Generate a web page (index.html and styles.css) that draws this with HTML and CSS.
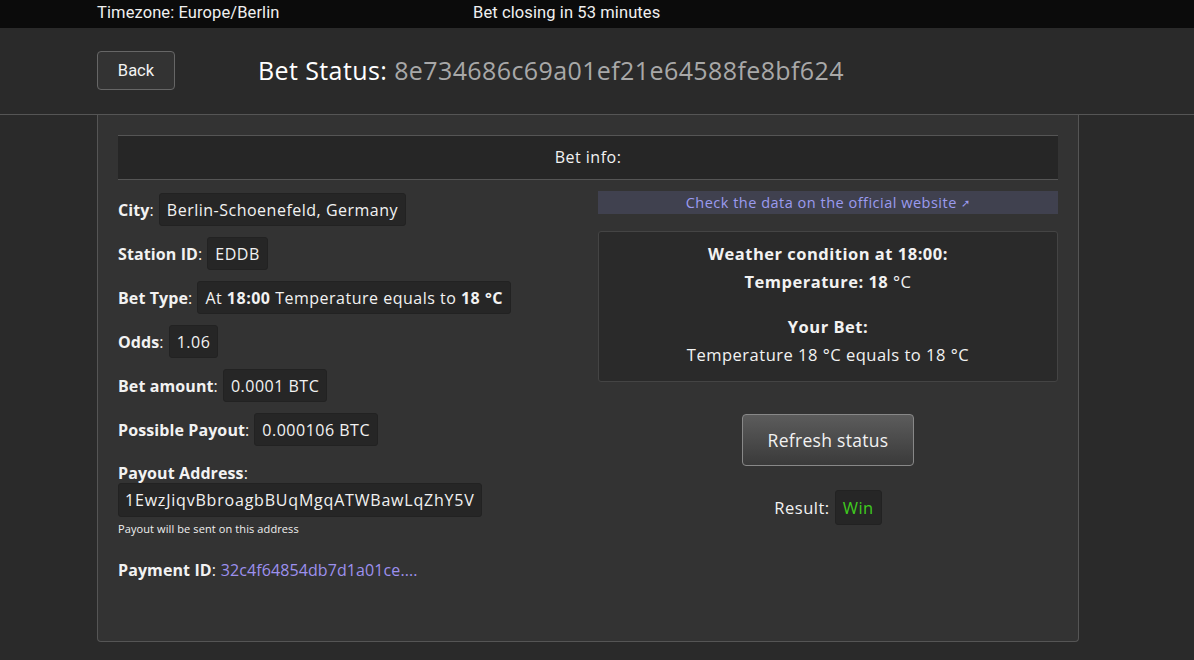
FILE: index.html
```html
<!DOCTYPE html>
<html>
<head>
<meta charset="utf-8">
<link rel="stylesheet" href="styles.css">
</head>
<body>
<div class="topbar">
  <div class="tz">Timezone: Europe/Berlin</div>
  <div class="closing">Bet closing in 53 minutes</div>
</div>
<div class="header">
  <button class="back">Back</button>
  <h1 class="title">Bet Status: <span class="hash">8e734686c69a01ef21e64588fe8bf624</span></h1>
</div>
<div class="card">
  <div class="info-head">Bet info:</div>
  <div class="cols">
    <div class="left">
      <div class="row"><span class="lbl"><b>City</b>:</span><span class="val">Berlin-Schoenefeld, Germany</span></div>
      <div class="row"><span class="lbl"><b>Station ID</b>:</span><span class="val">EDDB</span></div>
      <div class="row"><span class="lbl"><b>Bet Type</b>:</span><span class="val">At <b>18:00</b> Temperature equals to <b>18 °C</b></span></div>
      <div class="row"><span class="lbl"><b>Odds</b>:</span><span class="val">1.06</span></div>
      <div class="row"><span class="lbl"><b>Bet amount</b>:</span><span class="val">0.0001 BTC</span></div>
      <div class="row"><span class="lbl"><b>Possible Payout</b>:</span><span class="val">0.000106 BTC</span></div>
      <div class="addr-block">
        <div class="addr-label lbl"><b>Payout Address</b>:</div>
        <span class="val addr">1EwzJiqvBbroagbBUqMgqATWBawLqZhY5V</span>
        <div class="hint">Payout will be sent on this address</div>
      </div>
      <div class="payment"><span class="lbl"><b>Payment ID</b>:</span> <a class="pid" href="#">32c4f64854db7d1a01ce....</a></div>
    </div>
    <div class="right">
      <a class="check" href="#">Check the data on the official website <span class="arrow">➚</span></a>
      <div class="weather">
        <div class="wline"><b>Weather condition at 18:00:</b></div>
        <div class="wline"><b>Temperature: 18</b> °C</div>
        <div class="wline gap"><b>Your Bet:</b></div>
        <div class="wline">Temperature 18 °C equals to 18 °C</div>
      </div>
      <button class="refresh">Refresh status</button>
      <div class="result"><span>Result:</span><span class="val win">Win</span></div>
    </div>
  </div>
</div>
</body>
</html>
```
FILE: styles.css
```css
* { box-sizing: border-box; }
html, body { margin: 0; padding: 0; }
body {
  background: #2a2a2a;
  color: #f2f2f2;
  font-family: "Open Sans", "Lato", sans-serif;
  font-size: 16px;
  letter-spacing: 0.5px;
  height: 660px;
  overflow: hidden;
}
.topbar {
  height: 28px;
  background: #0b0b0b;
  display: flex;
  align-items: center;
  padding-left: 97px;
  padding-bottom: 3px;
  font-family: "Liberation Sans Narrow", "Roboto", sans-serif;
  font-size: 16.5px;
  letter-spacing: 0.1px;
  color: #f0f0f0;
}
.tz { width: 376px; }
.header {
  height: 87px;
  background: #2a2a2a;
  border-bottom: 1px solid #555;
  display: flex;
  align-items: center;
  padding-left: 97px;
  padding-bottom: 2px;
}
.back {
  width: 78px;
  height: 39px;
  background: #333;
  border: 1px solid #666;
  border-radius: 4px;
  color: #f2f2f2;
  font-family: "Liberation Sans Narrow", "Roboto", sans-serif;
  font-size: 16.5px;
  margin-right: 83px;
}
.title {
  margin: 0;
  font-weight: 400;
  font-size: 25px;
  color: #fff;
  letter-spacing: 0.4px;
}
.hash { color: #a8a8a8; }
.card {
  margin-left: 97px;
  width: 982px;
  height: 527px;
  background: #333;
  border: 1px solid #555;
  border-top: none;
  border-radius: 0 0 4px 4px;
  padding: 20px 20px 0;
}
.info-head {
  height: 45px;
  background: #262626;
  border-top: 1px solid #555;
  border-bottom: 1px solid #555;
  display: flex;
  align-items: center;
  justify-content: center;
  padding-bottom: 1px;
  font-size: 16px;
}
.cols {
  display: grid;
  grid-template-columns: 460px 460px;
  column-gap: 20px;
  padding-top: 13px;
}
.left { font-size: 16px; }
.lbl { letter-spacing: 0.1px; }
.row {
  height: 33px;
  margin-bottom: 11px;
  display: flex;
  align-items: center;
  white-space: pre;
}
.val {
  display: inline-flex;
  align-items: center;
  height: 33px;
  padding: 0 7px;
  background: #262626;
  border: 1px solid #222;
  border-radius: 3px;
  margin-left: 5px;
  white-space: pre;
}
.addr-block { margin-top: 16px; }
.addr-label { display: block; height: 20px; }
.addr { margin-left: 0; margin-top: 1px; height: 34px; padding: 0 6px; letter-spacing: 0.8px; }
.hint { font-size: 11px; margin-top: 4px; color: #f0f0f0; letter-spacing: 0.1px; }
.payment { margin-top: 23px; }
.pid { color: #9d90ee; text-decoration: none; letter-spacing: 0.1px; }
.right {
  display: flex;
  flex-direction: column;
  align-items: center;
}
.check {
  align-self: stretch;
  height: 23px;
  margin-top: -2px;
  background: #40414f;
  color: #9b9bf0;
  text-decoration: none;
  font-size: 14.5px;
  display: flex;
  align-items: center;
  justify-content: center;
}
.arrow { font-size: 11px; margin-left: 4px; }
.weather {
  align-self: stretch;
  margin-top: 17px;
  height: 151px;
  background: #2a2a2a;
  border: 1px solid #444;
  border-radius: 3px;
  padding-top: 8px;
  text-align: center;
  font-size: 16.5px;
}
.wline { height: 28px; line-height: 28px; }
.wline.gap { margin-top: 17px; }
.refresh {
  margin-top: 32px;
  width: 172px;
  height: 52px;
  border: 1px solid #888;
  border-radius: 4px;
  background: linear-gradient(#5c5c5c, #3a3a3a);
  color: #f2f2f2;
  font-family: "Open Sans", sans-serif;
  font-size: 17.5px;
  letter-spacing: 0.3px;
}
.result {
  margin-top: 24px;
  display: flex;
  align-items: center;
  white-space: pre;
  font-size: 16.5px;
  margin-left: 0;
}
.win { color: #3fcb1e; height: 35px; }
```
